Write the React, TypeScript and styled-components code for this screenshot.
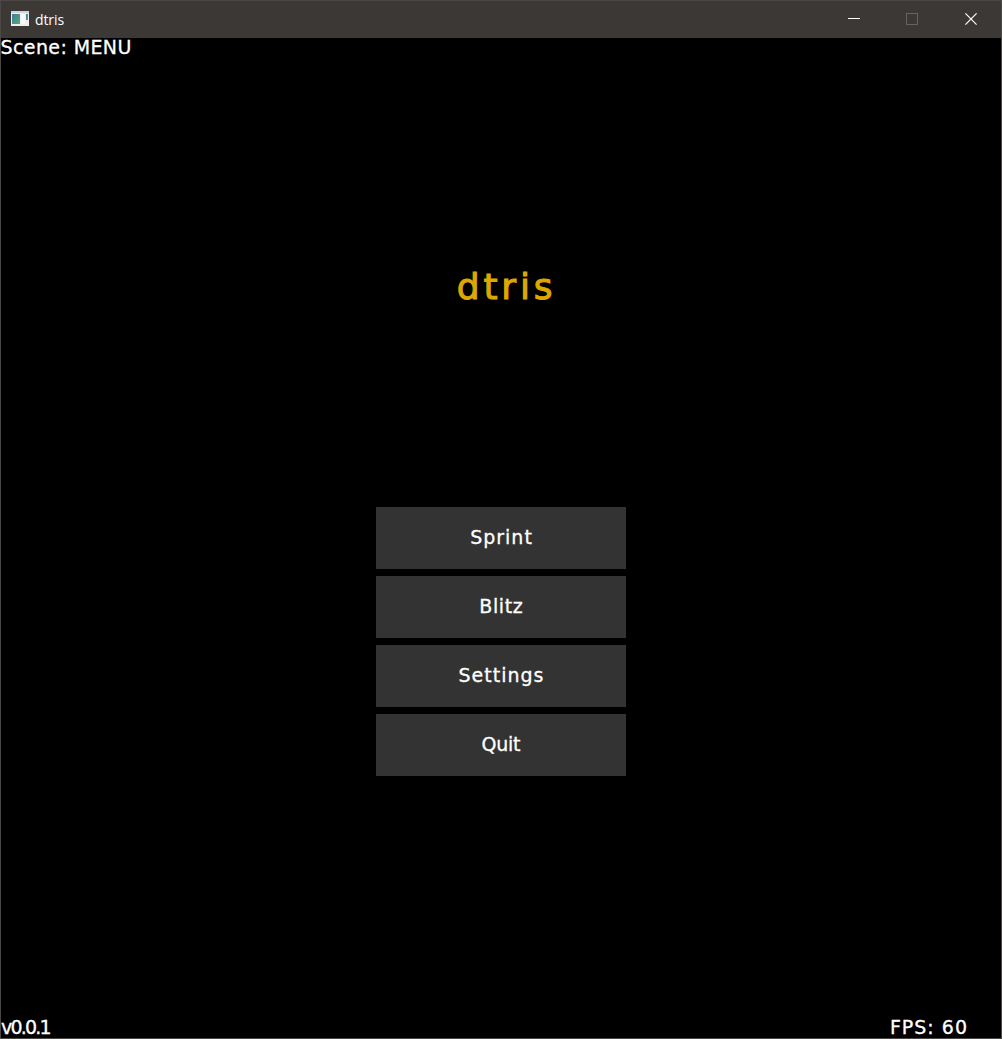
import React from "react";
import styled, { createGlobalStyle } from "styled-components";

const GlobalStyle = createGlobalStyle`
  * { box-sizing: border-box; }
  body { margin: 0; background: #000; overflow: hidden; }
`;

const Window = styled.div`
  width: 1002px;
  height: 1039px;
  display: flex;
  flex-direction: column;
  background: #000;
  border: 1px solid #4b4845;
`;

const TitleBar = styled.header`
  height: 37px;
  flex: none;
  display: flex;
  align-items: center;
  padding: 0 0 2px 9px;
  background: #3c3835;
`;

const WindowTitle = styled.span`
  flex: 1;
  margin: 2px 0 0 6px;
  font: 14px/20px "Open Sans", "Noto Sans", sans-serif;
  letter-spacing: -0.1px;
  color: #fff;
`;

const Control = styled.button<{ $width?: number }>`
  width: ${(p) => p.$width ?? 58}px;
  height: 34px;
  padding: 0;
  border: 0;
  background: none;
  display: grid;
  place-items: center;
`;

const Controls = styled.div`
  display: flex;
`;

const Scene = styled.main`
  flex: 1;
  display: flex;
  flex-direction: column;
  align-items: center;
`;

const GameText = styled.span<{ $spacing: number }>`
  font: 19px/20px "DejaVu Sans", sans-serif;
  letter-spacing: ${(p) => p.$spacing}px;
  margin-right: ${(p) => -p.$spacing}px;
  color: #fff;
  -webkit-text-stroke: 0.3px #fff;
  white-space: pre;
`;

const TopStatus = styled.div`
  width: 100%;
  height: 20px;
  display: flex;
  margin: -1px 0 1px -1px;
`;

const Logo = styled.h1`
  margin: 209px 0 0 11px;
  height: 40px;
  font: 36px/40px "DejaVu Sans", sans-serif;
  letter-spacing: 3.8px;
  color: #dfa800;
  -webkit-text-stroke: 1px #dfa800;
`;

const Menu = styled.nav`
  margin-top: 200px;
  display: flex;
  flex-direction: column;
  gap: 7px;
`;

const MenuButton = styled.button`
  width: 250px;
  height: 62px;
  padding: 0 0 2px;
  border: 0;
  background: #333;
  display: flex;
  align-items: center;
  justify-content: center;
`;

const BottomStatus = styled.footer`
  width: 100%;
  margin-top: auto;
  padding: 0 34px 1px 0;
  display: flex;
  justify-content: space-between;
`;

const items = [
  { label: "Sprint", spacing: 1 },
  { label: "Blitz", spacing: 0.6 },
  { label: "Settings", spacing: 1 },
  { label: "Quit", spacing: -0.2 },
];

const AppIcon = () => (
  <svg width="19" height="16" viewBox="0 0 19 16">
    <defs>
      <linearGradient id="screen" x1="0" y1="0" x2="1" y2="1">
        <stop offset="0" stopColor="#3f79a5" />
        <stop offset="1" stopColor="#58ad72" />
      </linearGradient>
    </defs>
    <rect x="1" y="0" width="18" height="15" fill="#eeeeee" />
    <rect x="1" y="0" width="18" height="2" fill="#d0d2d6" />
    <rect x="2" y="3" width="8" height="10" fill="url(#screen)" />
    <rect x="11" y="3" width="4" height="10" fill="#f8f8f8" />
    <rect x="16" y="3" width="2" height="6" fill="url(#screen)" />
  </svg>
);

export default function App() {
  return (
    <>
      <GlobalStyle />
      <Window>
        <TitleBar>
          <AppIcon />
          <WindowTitle>dtris</WindowTitle>
          <Controls>
            <Control aria-label="Minimize">
              <svg width="12" height="12"><path d="M0 5.5H12" stroke="#fff" /></svg>
            </Control>
            <Control aria-label="Maximize" disabled>
              <svg width="12" height="12"><rect x=".5" y=".5" width="11" height="11" fill="none" stroke="#65625f" /></svg>
            </Control>
            <Control aria-label="Close" $width={60}>
              <svg width="12" height="12"><path d="M.4 .4L11.6 11.6M11.6 .4L.4 11.6" stroke="#fff" strokeWidth="1.2" /></svg>
            </Control>
          </Controls>
        </TitleBar>
        <Scene>
          <TopStatus><GameText $spacing={0.4}>Scene: MENU</GameText></TopStatus>
          <Logo>dtris</Logo>
          <Menu>
            {items.map((item) => (
              <MenuButton key={item.label}>
                <GameText $spacing={item.spacing}>{item.label}</GameText>
              </MenuButton>
            ))}
          </Menu>
          <BottomStatus>
            <GameText $spacing={-1.8}>v0.0.1</GameText>
            <GameText $spacing={1}>FPS: 60</GameText>
          </BottomStatus>
        </Scene>
      </Window>
    </>
  );
}
